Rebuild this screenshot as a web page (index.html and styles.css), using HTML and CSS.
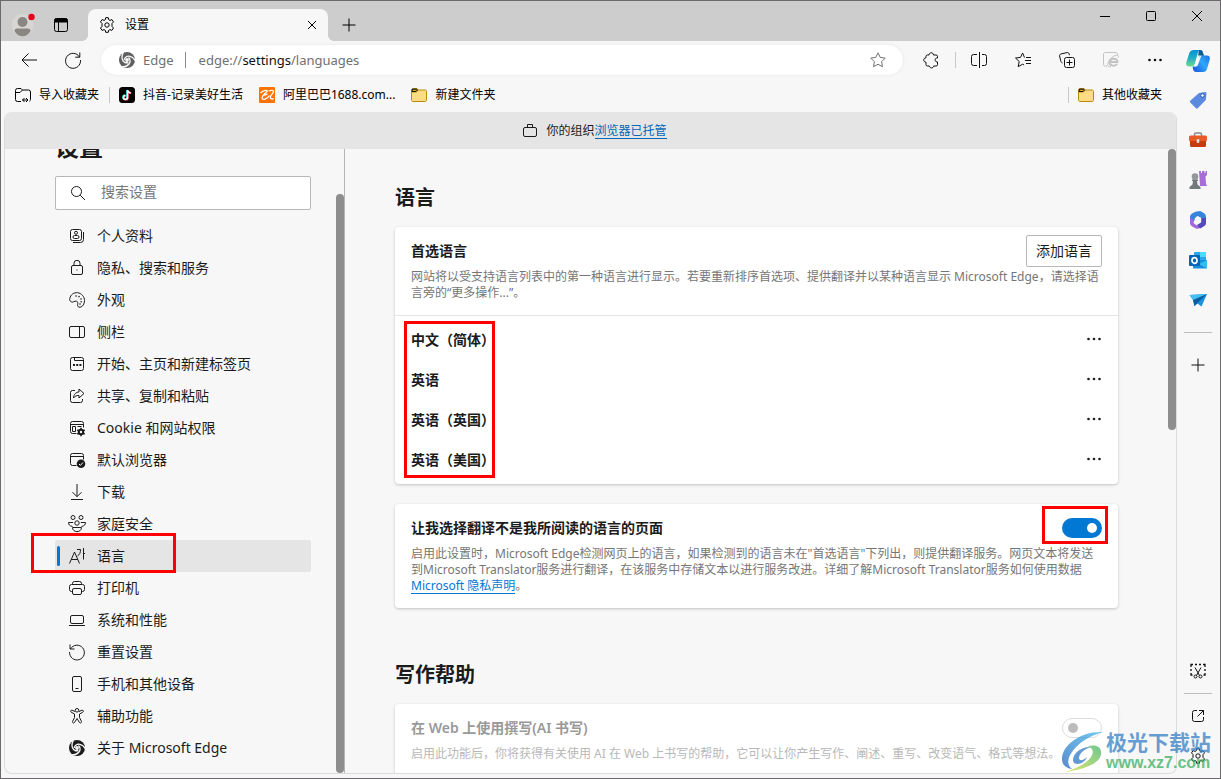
FILE: index.html
```html
<!DOCTYPE html>
<html lang="zh-CN">
<head>
<meta charset="utf-8">
<title>设置</title>
<link rel="stylesheet" href="styles.css">
</head>
<body>
<svg class="defs" aria-hidden="true">
  <symbol id="gear" viewBox="0 0 16 16"><path d="M6.700.7h2.600l.4 2 1.200.7 2-.8 1.600 2.300-1.500 1.600v2.900l1.500 1.600-1.600 2.400-2-.8-1.200.7-.4 2H6.700l-.4-2-1.200-.7-2 .8L1.500 11 3 9.400V6.500L1.500 4.900l1.600-2.300 2 .8 1.200-.7z" stroke-linejoin="round"/><circle cx="8" cy="8" r="2.200"/></symbol>
  <symbol id="dots" viewBox="0 0 16 16"><g fill="currentColor" stroke="none"><circle cx="2.500" cy="8" r="1.300"/><circle cx="8" cy="8" r="1.300"/><circle cx="13.500" cy="8" r="1.300"/></g></symbol>
  <symbol id="swirl" viewBox="0 0 16 16"><circle cx="8" cy="8" r="8" fill="currentColor" stroke="none"/><g stroke="#f9f9f9" stroke-width="1.300"><path id="blade" d="M5.300 8C5.500 5.300 8 3.800 10.800 4.300c2.300.4 4.200 2 5.700 4.500"/><path d="M5.300 8C5.500 5.300 8 3.800 10.800 4.300c2.300.4 4.200 2 5.700 4.500" transform="rotate(120 8 8)"/><path d="M5.300 8C5.500 5.300 8 3.800 10.800 4.300c2.300.4 4.200 2 5.700 4.500" transform="rotate(240 8 8)"/></g><circle cx="8" cy="8" r="1.900" fill="#f9f9f9" stroke="none"/></symbol>
  <symbol id="folder" viewBox="0 0 16 16"><path d="M.5 3.500c0-1 .6-2 1.600-2H6l1.500 1.500h6.400c1 0 1.600.6 1.600 1.600v8.300c0 1-.6 1.600-1.600 1.600H2.100c-1 0-1.600-.6-1.600-1.600z" fill="#ffdc83" stroke="#b98a10"/><path d="M1 5h4.500L7.300 3" fill="none" stroke="#b98a10"/><path d="M1.300 2.200h4.400l.8.800L5.200 4.400H1z" fill="#f5bf2b"/></symbol>
  <symbol id="plus" viewBox="0 0 16 16"><path d="M8 1.500v13M1.500 8h13"/></symbol>
  <symbol id="star" viewBox="0 0 16 16"><path d="M8 .8l2.200 4.600 5 .7-3.600 3.600.9 5L8 12.300l-4.500 2.400.9-5L.8 6.100l5-.7z"/></symbol>
</svg>

<header class="titlebar">
  <button class="avatar" aria-label="个人资料"><svg viewBox="0 0 24 24"><circle cx="10.500" cy="12" r="11" fill="#d8d6d3"/><circle cx="10.500" cy="9" r="5" fill="#8a8682"/><path d="M2.500 18c0-1.500 1-2.500 2.500-2.500h11c1.500 0 2.500 1 2.500 2.500-3.500 7-12.500 7-16 0z" fill="#8a8682"/><circle cx="19.500" cy="4" r="3.200" fill="#e3001b"/></svg></button>
  <button class="tab-actions" aria-label="标签操作"><svg class="icon" viewBox="0 0 16 16"><rect x="1.500" y="1.500" width="13" height="13" rx="2"/><path d="M2 2h12v3H2z" fill="currentColor"/><path d="M5.500 4v10.500"/></svg></button>
  <div class="tab">
    <svg class="icon"><use href="#gear"/></svg>
    <span>设置</span>
    <button class="tab-close" aria-label="关闭标签页"><svg viewBox="0 0 10 10"><path d="M1 1l8 8M9 1l-8 8"/></svg></button>
  </div>
  <button class="new-tab" aria-label="新建标签页"><svg class="icon"><use href="#plus"/></svg></button>
  <div class="window-controls">
    <button aria-label="最小化"><svg viewBox="0 0 12 12"><path d="M1 6.500h10"/></svg></button>
    <button aria-label="最大化"><svg viewBox="0 0 12 12"><rect x="1.500" y="1.500" width="9" height="9" rx="1"/></svg></button>
    <button aria-label="关闭"><svg viewBox="0 0 12 12"><path d="M1 1l10 10M11 1L1 11"/></svg></button>
  </div>
</header>

<div class="shell">
  <div class="browser">
    <div class="toolbar">
      <button aria-label="后退"><svg class="icon" viewBox="0 0 16 16"><path d="M7.500 1.500L1 8l6.500 6.500M1 8h15"/></svg></button>
      <button aria-label="刷新"><svg class="icon" viewBox="0 0 16 16"><path d="M14.500 5A7.500 7.500 0 1 0 15.500 8M14.800.5V5.200h-4.600"/></svg></button>
      <div class="address">
        <svg class="icon brand"><use href="#swirl"/></svg>
        <span class="brand">Edge</span><i></i>
        <span class="url">edge://<b>settings</b>/languages</span>
        <button aria-label="添加到收藏夹"><svg class="icon"><use href="#star"/></svg></button>
      </div>
      <button aria-label="扩展"><svg class="icon" viewBox="0 0 16 16"><path d="M6 3c0-3 4.500-3 4.500 0h2.600c.7 0 1.400.5 1.400 1.300V6c-3-.6-3.300 4.300 0 4v2.700c0 .8-.6 1.300-1.400 1.300h-2.400c0 2.500-4.300 2.500-4.300 0H4.300c-.8 0-1.300-.6-1.300-1.300v-2.500c-3 0-3-4.400 0-4.400V4.300C3 3.500 3.600 3 4.300 3z"/></svg></button>
      <span class="divider"></span>
      <button aria-label="拆分屏幕"><svg class="icon" viewBox="0 0 16 16"><path d="M8.500 0v16M6 2.500H2.500a2 2 0 0 0-2 2v7a2 2 0 0 0 2 2H6M11 2.500h2.500a2 2 0 0 1 2 2v7a2 2 0 0 1-2 2H11"/></svg></button>
      <button aria-label="收藏夹"><svg class="icon" viewBox="0 0 16 16"><path d="M9.500 5.500L7.600 1 5.500 5.400l-5 .6 3.700 3.500-1 5.200 4.400-2.500 1.500.8M11 5.500h5M10 8.500h6M11 11.500h5"/></svg></button>
      <button aria-label="集锦"><svg class="icon" viewBox="0 0 16 16"><rect x="5.500" y="5.500" width="10" height="10" rx="2"/><path d="M10.500 7.500v6M7.500 10.500h6M3.500 11C2 10.500 1.800 9 1.500 8L.6 4c-.2-1 .3-1.700 1.200-2L8 .6c1-.2 1.800.2 2 1l.5 1.600"/></svg></button>
      <button class="muted" aria-label="IE 模式"><svg class="icon" viewBox="0 0 16 16"><path d="M14.500 3V2c0-.8-.6-1.500-1.500-1.500H2.500C1.500.5.500 1.200.5 2v10.500c0 1 .8 1.500 1.500 1.500h2"/><path d="M14.200 12c-2 2.600-7.500 2.300-7.500-1.700 0-4.500 8-4.800 7.800-.3H7" stroke-width="2"/><path d="M15.300 5.500C16.500 1 9 3.500 5.500 9.500 4 13 4.500 15.500 8 14.500"/></svg></button>
      <button aria-label="设置及其他"><svg class="icon"><use href="#dots"/></svg></button>
    </div>

    <nav class="bookmarks" aria-label="收藏夹栏">
      <a href="#"><svg class="icon" viewBox="0 0 16 16"><path d="M6 14.500H2.500a2 2 0 0 1-2-2v-9a2 2 0 0 1 2-2H6L7.500 3h6a2 2 0 0 1 2 2v7.500a2 2 0 0 1-1 1.700M.5 5.500H5L7.500 3M7.500 13h5.500M9.500 11l-2 2 2 2M11 11l2 2-2 2"/></svg>导入收藏夹</a>
      <span class="divider"></span>
      <a href="#"><svg class="icon" viewBox="0 0 16 16"><rect width="16" height="16" rx="3.500" fill="#000" stroke="none"/><path d="M8 3v7.200a2 2 0 1 1-2-2M8 3c.3 1.700 1.500 2.500 3.200 2.700" stroke="#25e4dc" stroke-width="1.700"/><path d="M9 3.500v7.200a2 2 0 1 1-2-2M9 3.500c.3 1.700 1.500 2.500 3.200 2.700" stroke="#fe2c55" stroke-width="1.700"/><path d="M8.500 3.200v7.200a2 2 0 1 1-2-2M8.500 3.200c.3 1.700 1.500 2.500 3.200 2.700" stroke="#fff" stroke-width="1.500"/></svg>抖音-记录美好生活</a>
      <a href="#"><svg class="icon" viewBox="0 0 16 16"><rect width="16" height="16" rx="1" fill="#ff7300" stroke="none"/><path d="M1.500 6C4 3.500 7.500 2.800 8.300 3.800c.5 1-3 2.500-4.600 5.200-1.500 2.700 0 4 2.300 3.200 2-.7 3.500-2 4.500-3.700M5 8c1.500.2 2.500-.2 3.500-1.200M9.500 4c2.500-1 5.200-1 5 .7-.3 1.600-2.300 3-3 4.800-.8 2 .8 3 3.200 2.200" stroke="#fff" stroke-width="1.300"/></svg>阿里巴巴1688.com...</a>
      <a href="#"><svg class="icon"><use href="#folder"/></svg>新建文件夹</a>
      <span class="divider push"></span>
      <a href="#"><svg class="icon"><use href="#folder"/></svg>其他收藏夹</a>
    </nav>

    <div class="page">
      <div class="notice"><svg class="icon" viewBox="0 0 16 16"><rect x="1.500" y="4.500" width="13" height="9" rx="1.500"/><path d="M5.500 4.500v-3h5v3"/></svg><span>你的组织<a href="#">浏览器已托管</a></span></div>
      <div class="columns">
        <aside class="settings-nav">
          <div class="nav-body">
            <h1>设置</h1>
            <label class="search"><svg class="icon" viewBox="0 0 16 16"><circle cx="6.500" cy="6.500" r="5"/><path d="M10.200 10.200L15 15"/></svg><input type="search" placeholder="搜索设置" aria-label="搜索设置"></label>
            <ul>
              <li><a href="#"><svg class="icon" viewBox="0 0 16 16"><rect x="1.500" y="1.500" width="11" height="11" rx="2"/><circle cx="7" cy="4.800" r="1.500"/><rect x="4" y="7.500" width="6" height="3" rx="1.500"/><path d="M14.500 4v7.500a3 3 0 0 1-3 3H4"/></svg>个人资料</a></li>
              <li><a href="#"><svg class="icon" viewBox="0 0 16 16"><rect x="2.500" y="5.500" width="11" height="9" rx="1.500"/><path d="M5 5.500V3.300a3 3 0 0 1 6 0v2.200M7.500 10h1"/></svg>隐私、搜索和服务</a></li>
              <li><a href="#"><svg class="icon" viewBox="0 0 16 16"><path d="M.8 6.500C1.500 2.500 5 .3 8.600.7c4 .5 7 4 6.900 8-.1 3-1.500 6-4.300 6.500-1.800.3-2.800-1-2.600-2.500.3-2 .3-3-1-3.500C5.500 8.500 4 11 2.200 9.800.8 9 .5 8 .8 6.500z"/><g fill="currentColor" stroke="none"><circle cx="7" cy="4" r=".8"/><circle cx="10" cy="4.600" r=".8"/><circle cx="12" cy="7" r=".8"/><circle cx="12.200" cy="9.800" r=".8"/><circle cx="11" cy="12" r=".8"/></g></svg>外观</a></li>
              <li><a href="#"><svg class="icon" viewBox="0 0 16 16"><rect x=".5" y="2.500" width="15" height="11" rx="1.500"/><path d="M10.500 2.500v11"/></svg>侧栏</a></li>
              <li><a href="#"><svg class="icon" viewBox="0 0 16 16"><rect x="1.500" y="1.500" width="13" height="13" rx="2"/><path d="M5.500 1.500v3h9"/><path d="M4 9h2M7.200 9h2M10.400 9h2" stroke-width="2"/></svg>开始、主页和新建标签页</a></li>
              <li><a href="#"><svg class="icon" viewBox="0 0 16 16"><path d="M6 2.500H3.500a2 2 0 0 0-2 2v8a2 2 0 0 0 2 2h8a2 2 0 0 0 2-2V11M10 1l5 4.500-5 4.500V7.500C7.500 7.300 5.500 8.500 4.500 10c.1-3.500 2.500-6 5.500-6z"/></svg>共享、复制和粘贴</a></li>
              <li><a href="#"><svg class="icon" viewBox="0 0 16 16"><path d="M7.500 13.500h-4a2 2 0 0 1-2-2v-8a2 2 0 0 1 2-2h9a2 2 0 0 1 2 2v4M1.500 4.500h13M3.500 6.500h3v5h-3zM8.500 6.500h4"/><circle cx="12" cy="12" r="2.200" stroke-width="2"/><path d="M12 7.800v2M12 14.200v2M8.300 10l2 1M13.700 13l2 1M8.300 14l2-1M13.700 11l2-1" stroke-width="1.500"/></svg>Cookie 和网站权限</a></li>
              <li><a href="#"><svg class="icon" viewBox="0 0 16 16"><path d="M7.500 13.500h-4a2 2 0 0 1-2-2v-8a2 2 0 0 1 2-2h9a2 2 0 0 1 2 2v4M1.500 4.500h13"/><circle cx="12" cy="11.800" r="4.300" fill="currentColor" stroke="none"/><path d="M10 12l1.400 1.400L14 10.500" stroke="#f7f7f7"/></svg>默认浏览器</a></li>
              <li><a href="#"><svg class="icon" viewBox="0 0 16 16"><path d="M8 0v12.500M3.500 8.200L8 12.700l4.500-4.500M2 15.500h12"/></svg>下载</a></li>
              <li><a href="#"><svg class="icon" viewBox="0 0 16 16"><circle cx="4" cy="1.500" r="2"/><circle cx="12" cy="1.500" r="2"/><circle cx="8" cy="7" r="2.200"/><path d="M3.500 10.500C.5 10-.5 8.500-.5 6.500h4.700M12.500 10.500c3-.5 4-2 4-4h-4.700M3.500 11.500h9c0 5.500-9 5.500-9 0z"/></svg>家庭安全</a></li>
              <li class="selected"><a href="#" aria-current="page"><svg class="icon" viewBox="0 0 16 16"><path d="M.5 15.500L5.500 4l5 11.500M2.300 11.500h6.500M8 1.500h3.500c0 3-.7 5-3 6.500M14.500 0v11.500M14.500 5.500H16"/></svg>语言</a><span class="mark"></span></li>
              <li><a href="#"><svg class="icon" viewBox="0 0 16 16"><path d="M4 11.500H2.500a2 2 0 0 1-2-2v-3a2 2 0 0 1 2-2h11a2 2 0 0 1 2 2v3a2 2 0 0 1-2 2H12M3.500 4.500v-1a2 2 0 0 1 2-2h5a2 2 0 0 1 2 2v1"/><rect x="3.500" y="8.500" width="9" height="6" rx="1.500"/></svg>打印机</a></li>
              <li><a href="#"><svg class="icon" viewBox="0 0 16 16"><rect x="1.500" y="3.500" width="13" height="8" rx="1.500"/><path d="M0 13.500h16"/></svg>系统和性能</a></li>
              <li><a href="#"><svg class="icon" viewBox="0 0 16 16"><path d="M1.500 5A7.400 7.400 0 1 1 .6 8M1 .5V5h4.500"/></svg>重置设置</a></li>
              <li><a href="#"><svg class="icon" viewBox="0 0 16 16"><rect x="3.500" y=".5" width="9" height="15" rx="1.500"/><path d="M6.500 12.500h3"/></svg>手机和其他设备</a></li>
              <li><a href="#"><svg class="icon" viewBox="0 0 16 16"><circle cx="8" cy="2.300" r="1.800"/><path d="M6 3.500l-3-1.300c-1.300-.3-2 1.300-.8 2L5.500 6v3.500l-2 4c-.3 1.500 1.300 2 2 1L8 10.500l2.500 4c.7 1 2.300.5 2-1l-2-4V6l3.300-1.800c1.200-.7.500-2.300-.8-2l-3 1.300"/></svg>辅助功能</a></li>
              <li><a href="#"><svg class="icon"><use href="#swirl"/></svg>关于 Microsoft Edge</a></li>
            </ul>
          </div>
          <div class="thumb nav-thumb"></div>
        </aside>

        <main>
          <div class="content">
            <h2>语言</h2>
            <section class="card">
              <div class="card-head">
                <div class="row"><h3>首选语言</h3><button class="add">添加语言</button></div>
                <p>网站将以受支持语言列表中的第一种语言进行显示。若要重新排序首选项、提供翻译并以某种语言显示 Microsoft Edge，请选择语言旁的“更多操作...”。</p>
              </div>
              <div class="languages">
                <ul>
                  <li>中文（简体）<button aria-label="更多操作"><svg class="icon"><use href="#dots"/></svg></button></li>
                  <li>英语<button aria-label="更多操作"><svg class="icon"><use href="#dots"/></svg></button></li>
                  <li>英语（英国）<button aria-label="更多操作"><svg class="icon"><use href="#dots"/></svg></button></li>
                  <li>英语（美国）<button aria-label="更多操作"><svg class="icon"><use href="#dots"/></svg></button></li>
                </ul>
                <span class="mark"></span>
              </div>
            </section>
            <section class="card">
              <div class="card-head">
                <div class="row"><h3><label for="translate">让我选择翻译不是我所阅读的语言的页面</label></h3><span class="switch"><input type="checkbox" id="translate" checked><span class="mark"></span></span></div>
                <p>启用此设置时，Microsoft Edge检测网页上的语言，如果检测到的语言未在"首选语言"下列出，则提供翻译服务。网页文本将发送到Microsoft Translator服务进行翻译，在该服务中存储文本以进行服务改进。详细了解Microsoft Translator服务如何使用数据 <a href="#">Microsoft 隐私声明</a>。</p>
              </div>
            </section>
            <h2 class="next">写作帮助</h2>
            <section class="card off">
              <div class="card-head">
                <div class="row"><h3><label for="compose">在 Web 上使用撰写(AI 书写)</label></h3><span class="switch"><input type="checkbox" id="compose" disabled></span></div>
                <p>启用此功能后，你将获得有关使用 AI 在 Web 上书写的帮助，它可以让你产生写作、阐述、重写、改变语气、格式等想法。</p>
              </div>
            </section>
          </div>
          <div class="thumb main-thumb"></div>
        </main>
      </div>
    </div>
  </div>

  <aside class="sidebar">
    <button class="copilot" aria-label="Copilot"><svg viewBox="0 0 24 24">
      <defs><linearGradient id="c1" x1="0" y1="0" x2="0" y2="1"><stop offset="0" stop-color="#0a8fd8"/><stop offset=".5" stop-color="#1fb0c4"/><stop offset="1" stop-color="#6fdc8c"/></linearGradient><linearGradient id="c2" x1="1" y1="0" x2="0" y2="1"><stop offset="0" stop-color="#1a5fd8"/><stop offset=".5" stop-color="#2fa8fb"/><stop offset="1" stop-color="#1450d8"/></linearGradient></defs>
      <path d="M14 1c2 0 2.500 1 3 3l.8 2.500H21c2.500 0 3.300 2 2.700 4l-2.400 8.500c-.8 3-2 4-4.500 4h-6.500c-2 0-2.800-1-3.300-3l-.5-2.500h3c1.500 0 2.200-.8 2.700-2.300L15.500 6z" fill="url(#c2)"/>
      <path d="M8 1h6.500C12.500 1.500 12 3 11.500 5L9 14c-.6 2.300-1.500 3.500-4 3.500H3c-2.500 0-3.300-2-2.700-4L3 5c.8-3 2.300-4 5-4z" fill="url(#c1)"/><path d="M13 1h1c2 0 2.500 1 3 3l.8 2.500h-2c-1.600 0-2.600.8-3 2.300l-1.300 1z" fill="#0a5f91"/><path d="M15.800 6.500c-1.700 0-2.600.8-3 2.300L11 15c-.5 1.800-1.300 2.500-3 2.500.6-.7.900-1.500 1.200-2.700L11.500 7c.2-.4.500-.5 1-.5z" fill="#fff"/></svg></button>
    <button aria-label="购物"><svg viewBox="0 0 20 20"><path d="M11 3l6-1c1 0 1.500.5 1.500 1.500l-.7 6.500-7.800 8c-.7.700-1.600.7-2.300 0L2.500 12.700c-.8-.8-.8-1.600 0-2.300z" fill="#5c8ae0"/><circle cx="14.500" cy="5.500" r="1.800" fill="#eff4ff" stroke="#315ba8"/></svg></button>
    <button aria-label="工具"><svg viewBox="0 0 20 20"><path d="M6.500 6V4.500C6.500 3.500 7 3 8 3h4c1 0 1.500.5 1.500 1.500V6" fill="none" stroke="#858b91" stroke-width="1.500"/><rect x="1" y="5.500" width="18" height="6" rx="1.500" fill="#e95b26"/><path d="M2 11h16v4.500c0 .8-.5 1.500-1.500 1.500h-13c-1 0-1.500-.7-1.500-1.500z" fill="#c53b0d"/><rect x="8.700" y="9" width="2.600" height="4" rx="1" fill="#dce2e6"/></svg></button>
    <button aria-label="游戏"><svg viewBox="0 0 20 20"><path d="M11 1h2v2h1V1h2.500v2h1V1H19v4l-1.500 1.500.5 7 1 2.500h-7z" fill="#a66ed5"/><circle cx="7" cy="6.500" r="3.300" fill="#92989c"/><path d="M4 9.500h6v1.500H9l.5 3.500L12.500 17v2h-11v-2l3-2.500L5 11H4z" fill="#73787d"/></svg></button>
    <button aria-label="Microsoft 365"><svg viewBox="0 0 20 20"><path d="M7.500 1.700L12 1c3 1.500 6 2.500 6 6v4l-5-3-4-2-3.500 6L2 12V7c0-2.700 3-4 5.500-5.300z" fill="#3684dc"/><path d="M2 8v5c0 2.500 3 4 6 5.500 2 .8 3 0 5-1.200l-6-3c-1.500-1-2-2.500-1.500-4.500z" fill="#a267d8"/><path d="M18 8v5c0 2-1 3-6 5.500l-3-3.500 4-2.500V8z" fill="#5547bf"/><path d="M10 6.200l3.200 1.900v3.800L10 13.800l-3.200-1.900V8.100z" fill="#f7f7f7"/></svg></button>
    <button aria-label="Outlook"><svg viewBox="0 0 20 20"><rect x="6" y="2" width="12" height="11" rx="1" fill="#28a8ea"/><path d="M12 2h6v5h-6z" fill="#50d9ff"/><path d="M5 10h14v7.500c0 .7-.4 1-1 1H6c-.6 0-1-.3-1-1z" fill="#1490df"/><path d="M19 10v8.500L11 14z" fill="#35bcf0"/><rect x="1" y="5" width="11" height="11" rx="1" fill="#0364b8"/><ellipse cx="6.500" cy="10.500" rx="2.500" ry="2.900" fill="none" stroke="#fff" stroke-width="1.700"/></svg></button>
    <button aria-label="Drop"><svg viewBox="0 0 20 20"><path d="M1.500 5L19 4l-5.500 12.500-4-3L6.500 16 5 10z" fill="#1a93dc"/><path d="M1.500 5L19 4 5.500 10.200z" fill="#46c0f2"/><path d="M5 10L19 4l-9.500 9L6.500 16z" fill="#0a5da0"/></svg></button>
    <hr>
    <button aria-label="自定义"><svg class="icon"><use href="#plus"/></svg></button>
    <button class="bottom" aria-label="截图"><svg class="icon" viewBox="0 0 16 16"><path d="M1 4V1.500h2M5 1.500h2M9 1.500h2M13 1.500h2V4M1 6v2M15 6v2M1 10v2h1.500M15 10v2h-1.500" stroke-width="1.300"/><path d="M5 4.500l4.500 8M11 4.500l-4.500 8"/><circle cx="5.500" cy="13.500" r="1.500"/><circle cx="10.500" cy="13.500" r="1.500"/></svg></button>
    <hr>
    <button class="open" aria-label="在新窗口中打开"><svg class="icon" viewBox="0 0 16 16"><path d="M7 2.500H4.500a2 2 0 0 0-2 2v7a2 2 0 0 0 2 2h7a2 2 0 0 0 2-2V9M9 2.500h4.500V7M13.500 2.500L7.500 8.500"/></svg></button>
    <button aria-label="侧栏设置"><svg class="icon"><use href="#gear"/></svg></button>
  </aside>
</div>

<div class="watermark">
  <svg viewBox="0 0 42 46"><defs><linearGradient id="w1" x1="1" y1="0" x2="0" y2="1"><stop offset="0" stop-color="#43b9ec"/><stop offset="1" stop-color="#2467bd"/></linearGradient><linearGradient id="w2" x1="1" y1="0" x2="0" y2="1"><stop offset="0" stop-color="#3fb46b"/><stop offset="1" stop-color="#d9e03b"/></linearGradient></defs><path d="M42 4C20 3 1 17 1 31c0 6 4 9 10 10-5-4-5-10 0-17C17 15 28 8 42 4z" fill="url(#w1)"/><path d="M12 32c0-7 9-14 18-13-7 2-12 7-12 11 0 3 4 3 8-1-2 7-14 10-14 3z" fill="#2e79c8"/><path d="M27 18c8-2 14 1 13 8-1 10-19 16-36 18 13-4 24-10 27-17 2-4 0-7-4-9z" fill="url(#w2)"/></svg>
  <div><strong>极光下载站</strong><span>www.xz7.com</span></div>
</div>
</body>
</html>
```
FILE: styles.css
```css
* { box-sizing: border-box; }

body {
  margin: 0;
  height: 100vh;
  display: flex;
  flex-direction: column;
  overflow: hidden;
  position: relative;
  border: 1px solid #6b696b;
  background: #f7f7f7;
  color: #1b1b1b;
  font: 14px/20px "Noto Sans", "Noto Sans CJK SC", sans-serif;
}

h1, h2, h3, p, ul { margin: 0; padding: 0; }
ul { list-style: none; }
a { color: inherit; text-decoration: none; }
button {
  display: flex;
  align-items: center;
  justify-content: center;
  padding: 0;
  border: 0;
  background: none;
  color: inherit;
  font: inherit;
}
svg { display: block; flex: none; fill: none; stroke: currentColor; }
.defs { position: absolute; width: 0; height: 0; }
.icon { width: 16px; height: 16px; overflow: visible; }
.divider { width: 1px; height: 16px; background: #c8c8c8; }

/* Title bar */
.titlebar { display: flex; flex: none; height: 40px; padding-left: 10px; background: #cdcdcd; color: #000; }
.avatar { width: 26px; height: 48px; }
.avatar svg { width: 24px; height: 24px; stroke: none; }
.tab-actions { width: 48px; margin-right: 3px; padding-top: 8px; }
.tab {
  position: relative;
  display: flex;
  align-items: center;
  gap: 10px;
  width: 240px;
  margin-top: 8px;
  padding: 0 11px;
  border-radius: 8px 8px 0 0;
  background: #f7f7f7;
  font-size: 12px;
}
.tab::before, .tab::after { content: ""; position: absolute; bottom: 0; width: 6px; height: 6px; }
.tab::before { left: -6px; background: radial-gradient(circle at 0 0, transparent 6px, #f7f7f7 6px); }
.tab::after { right: -6px; background: radial-gradient(circle at 100% 0, transparent 6px, #f7f7f7 6px); }
.tab-close { margin-left: auto; }
.tab-close svg { width: 10px; height: 10px; }
.new-tab { width: 42px; padding-top: 8px; }
.window-controls { display: flex; height: 30px; margin-left: auto; }
.window-controls button { width: 46px; }
.window-controls svg { width: 12px; height: 12px; }

/* Window layout */
.shell { display: flex; flex: 1; min-height: 0; }
.browser { display: flex; flex: 1; flex-direction: column; min-width: 0; }

/* Toolbar */
.toolbar { display: flex; align-items: center; flex: none; height: 38px; padding-left: 6px; color: #111; }
.toolbar > button { width: 44px; height: 32px; }
.toolbar > .divider { margin: 0 1px 0 2px; }
.toolbar .muted { color: #c3c3c3; }
.address {
  display: flex;
  align-items: center;
  flex: 1;
  height: 30px;
  margin: 0 6px;
  padding: 0 17px 0 18px;
  border-radius: 15px;
  background: #fff;
  box-shadow: 0 0 3px #e2e2e2;
  color: #707070;
  font-size: 13px;
}
.address .icon.brand { margin-right: 8px; color: #606060; }
.address i { width: 1px; height: 16px; margin: 0 13px 0 11px; background: #8a8a8a; }
.address b { color: #111; font-weight: 400; }
.address button { margin-left: auto; }

/* Favorites bar */
.bookmarks { display: flex; align-items: center; flex: none; gap: 16px; height: 33px; padding: 0 15px 2px 14px; color: #000; font-size: 12px; }
.bookmarks a { display: flex; align-items: center; gap: 8px; }
.bookmarks .divider { margin: 0 -7px 0 -6px; }
.bookmarks .push { margin-left: auto; }

/* Settings page */
.page {
  display: flex;
  flex: 1;
  flex-direction: column;
  min-height: 0;
  margin: 0 0 4px 3px;
  overflow: hidden;
  border: 1px solid #dcdcdc;
  border-top: 0;
  border-radius: 8px;
}
.notice { display: flex; align-items: center; justify-content: center; flex: none; gap: 8px; height: 37px; padding-left: 8px; background: #e5e5e5; font-size: 12px; line-height: 16px; }
.notice a { display: inline-block; border-bottom: 1px solid #0067b8; color: #0067b8; line-height: 15px; }
.columns { display: flex; flex: 1; min-height: 0; }
.settings-nav { display: flex; flex: none; width: 340px; overflow: hidden; border-right: 1px solid #b5b5b5; }
.nav-body { flex: 1; padding: 0 25px 0 50px; }
.thumb { flex: none; width: 8px; border-radius: 4px; background: #8d8d8d; }
.nav-thumb { margin-top: 45px; }
h1 { margin: -18px 0 13px; font-size: 24px; font-weight: 700; line-height: 32px; }
.search { display: flex; align-items: center; gap: 15px; height: 34px; margin-bottom: 10px; padding-left: 14px; border: 1px solid #b8b8b8; border-radius: 2px; background: #fff; }
.search input { flex: 1; min-width: 0; padding: 0 0 2px; border: 0; outline: 0; background: none; font: inherit; }
.search input::placeholder { color: #767676; }
.settings-nav li { position: relative; }
.settings-nav li a { display: flex; align-items: center; gap: 12px; height: 32px; padding-left: 14px; }
.selected { border-radius: 2px; background: #e5e5e5; }
.selected::before { content: ""; position: absolute; top: 6px; bottom: 6px; left: 2px; width: 3px; border-radius: 2px; background: #0078d4; }

.mark { position: absolute; border: 3px solid #f00; pointer-events: none; }
.selected .mark { top: -7px; bottom: -1px; left: -24px; width: 145px; }
.languages .mark { top: 5px; bottom: 6px; left: 9px; width: 91px; }
.switch .mark { top: -12px; right: -6px; bottom: -6px; left: -20px; }

main { display: flex; flex: 1; min-width: 0; overflow: hidden; }
.content { flex: 1; min-width: 0; padding: 35px 50px 0; }
.main-thumb { height: 281px; }
h2 { margin-bottom: 15px; font-size: 20px; font-weight: 700; line-height: 28px; }
h2.next { margin-top: 53px; }
.card { margin-bottom: 20px; border-radius: 4px; background: #fff; box-shadow: 0 1px 3px #c0c0c0; }
.card-head { padding: 8px 16px 14px; }
.row { display: flex; align-items: center; justify-content: space-between; height: 32px; margin-bottom: 2px; }
h3 { font-size: 14px; font-weight: 600; }
.add { width: 76px; height: 32px; border: 1px solid #b8b8b8; border-radius: 2px; background: #fff; }
.card p { color: #767676; font-size: 12px; line-height: 16px; }
.card p a { display: inline-block; border-bottom: 1px solid #0078d4; color: #0078d4; line-height: 15px; }
.languages { position: relative; padding: 4px 16px; border-top: 1px solid #e5e5e5; font-weight: 600; }
.languages li { display: flex; align-items: center; justify-content: space-between; height: 40px; }
.languages button { padding-bottom: 2px; }
.switch { position: relative; display: flex; }
.switch input { appearance: none; display: flex; align-items: center; justify-content: flex-end; width: 40px; height: 20px; margin: 0; padding: 0 5px; border-radius: 10px; background: #0078d4; }
.switch input::before { content: ""; width: 10px; height: 10px; border-radius: 5px; background: #fff; }
.switch input:disabled { justify-content: flex-start; border: 1px solid #ddd; background: #fff; }
.switch input:disabled::before { background: #bcbcbc; }
.off h3 { color: #999; }
.off p { color: #b8b8b8; }

/* Browser sidebar */
.sidebar { display: flex; flex: none; flex-direction: column; align-items: center; width: 43px; padding: 0 2px 2px 0; color: #111; }
.sidebar button { flex: none; width: 40px; height: 40px; }
.sidebar button svg:not(.icon) { width: 20px; height: 20px; stroke: none; }
.sidebar .copilot { height: 39px; }
.sidebar .copilot svg:not(.icon) { width: 24px; height: 24px; }
.sidebar hr { flex: none; width: 28px; height: 1px; margin: 12px 0; border: 0; background: #bdbdbd; }
.sidebar .bottom { margin-top: auto; }
.sidebar .bottom + hr { margin: 2px 0; }

/* Site mark */
.watermark { position: absolute; right: 9px; bottom: 4px; display: flex; align-items: center; gap: 3px; opacity: .75; pointer-events: none; }
.watermark svg { width: 42px; height: 46px; stroke: none; }
.watermark div { display: flex; flex-direction: column; }
.watermark strong { color: #357fc8; font: 700 21px/24px "Noto Sans CJK SC", sans-serif; }
.watermark span { color: #3aaf62; font: 700 16px/20px "Liberation Sans", sans-serif; }
```
